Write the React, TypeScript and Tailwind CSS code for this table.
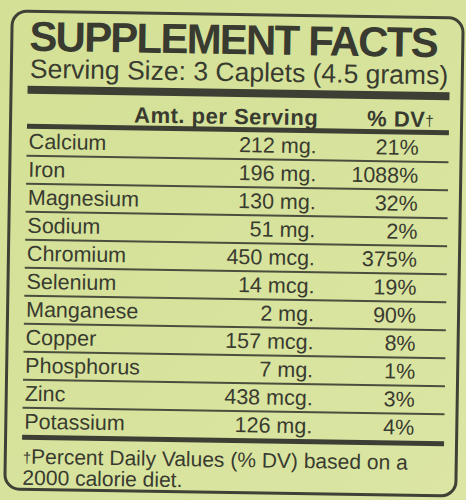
import React from "react";

const rows = [
  { name: "Calcium", amt: "212 mg.", dv: "21%" },
  { name: "Iron", amt: "196 mg.", dv: "1088%" },
  { name: "Magnesium", amt: "130 mg.", dv: "32%" },
  { name: "Sodium", amt: "51 mg.", dv: "2%" },
  { name: "Chromium", amt: "450 mcg.", dv: "375%" },
  { name: "Selenium", amt: "14 mcg.", dv: "19%" },
  { name: "Manganese", amt: "2 mg.", dv: "90%" },
  { name: "Copper", amt: "157 mcg.", dv: "8%" },
  { name: "Phosphorus", amt: "7 mg.", dv: "1%" },
  { name: "Zinc", amt: "438 mcg.", dv: "3%" },
  { name: "Potassium", amt: "126 mg.", dv: "4%" },
];

export default function App() {
  return (
    <div
      className="w-[466px] h-[500px] overflow-hidden bg-gradient-to-br from-[#d3e095] via-[#d7e39c] to-[#dce5a4] text-[#393b30]"
      style={{ fontFamily: '"Liberation Sans", Arial, sans-serif' }}
    >
      {/* label box, slightly tilted like the photo */}
      <div className="ml-[7px] mt-[13px] w-[454px] h-[481px] border-[3px] border-[#3f4136] rounded-[16px] rotate-[0.9deg] pl-[15px] pr-[11px]">
        <h1 className="ml-[1px] mt-[4px] text-[42px] leading-[40px] font-bold tracking-[-1.8px]">
          SUPPLEMENT FACTS
        </h1>
        <p className="ml-[2px] text-[26.5px] leading-[24px]">
          Serving Size: 3 Caplets (4.5 grams)
        </p>
        <div className="mt-[5px] h-[8px] bg-[#3d3f34]" />

        {/* column headings */}
        <div className="mt-[10px] flex text-[22px] leading-[20px] font-bold tracking-[0.5px]">
          <span className="pl-[107px] w-[340px]">Amt. per Serving</span>
          <span>
            % DV<sup className="text-[15px] font-normal relative -top-[1px]">†</sup>
          </span>
        </div>
        <div className="h-[5px] bg-[#3d3f34]" />

        {rows.map((r, i) => (
          <div
            key={r.name}
            className={
              i === rows.length - 1
                ? "flex h-[31px] border-b-[5px] border-[#3d3f34] text-[21.5px] leading-[26px]"
                : "flex h-[28px] border-b-2 border-[#4b4e3e] text-[21.5px] leading-[26px]"
            }
          >
            <span className="flex-1 pl-[2px]">{r.name}</span>
            <span className="w-[140px] text-right">{r.amt}</span>
            <span className="w-[103px] text-right pr-[1px]">{r.dv}</span>
            <span className="w-[29px]" />
          </div>
        ))}

        <p className="mt-[6px] pl-[1px] text-[21px] leading-[21px]">
          <sup className="text-[15px] relative -top-[1px]">†</sup>Percent Daily Values (% DV) based on a
          <br />
          2000 calorie diet.
        </p>
      </div>
      <p className="mt-[3px] ml-[22px] text-[20px] leading-[20px] font-bold">INGREDIENTS:</p>
    </div>
  );
}
